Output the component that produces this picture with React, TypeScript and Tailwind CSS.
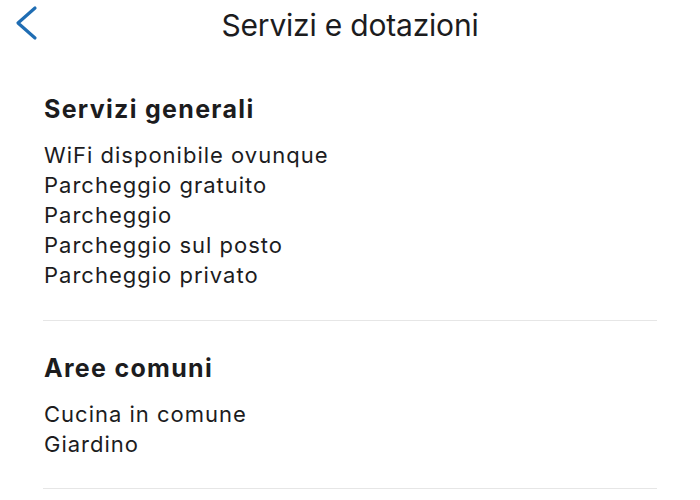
import React from "react";

const sections = [
  {
    title: "Servizi generali",
    items: [
      "WiFi disponibile ovunque",
      "Parcheggio gratuito",
      "Parcheggio",
      "Parcheggio sul posto",
      "Parcheggio privato",
    ],
    pt: "pt-0",
    pb: "pb-[30px]",
  },
  {
    title: "Aree comuni",
    items: ["Cucina in comune", "Giardino"],
    pt: "pt-[32px]",
    pb: "pb-[29px]",
  },
];

export default function App() {
  return (
    <div
      className="w-[700px] h-[500px] bg-white text-[#1c1c1e] overflow-hidden"
      style={{ fontFamily: "Inter, 'Noto Sans', sans-serif" }}
    >
      <header className="h-[94px] flex items-start">
        <div className="w-[120px] pl-[14px] pt-[4px]">
          <svg width="26" height="38" viewBox="0 0 26 38" fill="none">
            <path
              d="M21 4 L4 19 L21 34"
              stroke="#1f6db3"
              strokeWidth="3.2"
              strokeLinecap="round"
              strokeLinejoin="round"
            />
          </svg>
        </div>
        <h1 className="flex-1 text-center text-[30px] leading-[40px] pt-[5px] font-normal tracking-[-0.2px]">
          Servizi e dotazioni
        </h1>
        <div className="w-[120px]" />
      </header>
      <main className="px-[43px]">
        {sections.map((s) => (
          <section
            key={s.title}
            className={`${s.pt} ${s.pb} border-b border-[#e6e6e6]`}
          >
            <h2 className="text-[25px] leading-[30px] font-bold pl-[1px] tracking-[1.3px]">
              {s.title}
            </h2>
            <ul className="mt-[16px] pl-[1px]">
              {s.items.map((it) => (
                <li key={it} className="text-[22px] leading-[30px] tracking-[1px]">
                  {it}
                </li>
              ))}
            </ul>
          </section>
        ))}
      </main>
    </div>
  );
}
